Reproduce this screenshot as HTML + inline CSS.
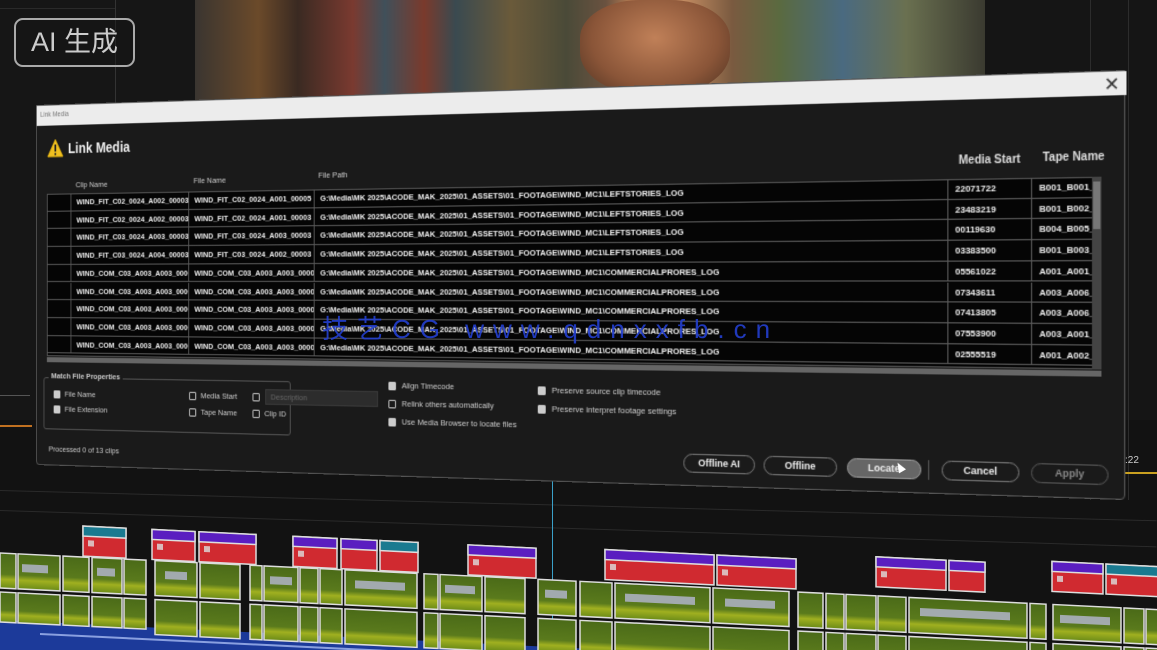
<!DOCTYPE html>
<html><head><meta charset="utf-8"><style>
*{margin:0;padding:0;box-sizing:border-box}
body{width:1157px;height:650px;overflow:hidden;background:#121212;position:relative;font-family:"Liberation Sans",sans-serif;color:#ddd}
.abs{position:absolute}
#dlg{position:absolute;left:0;top:0;width:1089px;height:360px;transform-origin:0 0;transform:matrix3d(0.8318,-0.04266,0,-0.0001497,0,1,0,0,0,0,1,0,36,105,0,1);background:#1a1a1a;border:1px solid #555;border-radius:0 0 4px 4px}
#dlg .t{position:absolute;white-space:nowrap;font-family:"Liberation Sans Narrow","Liberation Sans",sans-serif}
.row{position:absolute;left:12px;width:1048px;height:17.7px;border-bottom:1px solid #5a5a5a}
.row div{position:absolute;top:0;height:17.7px;line-height:17.7px;font-size:8px;color:#eee;white-space:nowrap;overflow:hidden;font-family:"Liberation Sans Narrow","Liberation Sans",sans-serif;font-weight:bold;border-left:1px solid #5a5a5a;padding-left:6px}
.cb{position:absolute;width:8px;height:8px;border:1px solid #ccc;border-radius:1px}
.cb.on{background:#ccc}
.lbl{position:absolute;font-size:8px;color:#ccc;white-space:nowrap}
.btn{position:absolute;height:17px;border:1.5px solid #777;border-radius:9px;font-size:9px;font-weight:bold;text-align:center;line-height:14px;color:#eee;top:330px}
</style></head><body>
<div class="abs" style="left:0;top:0;width:195px;height:420px;background:#161616"></div>
<div class="abs" style="left:115px;top:0;width:1px;height:110px;background:#333"></div>
<div class="abs" style="left:0;top:8px;width:115px;height:1px;background:#2a2a2a"></div>
<div class="abs" style="left:985px;top:0;width:172px;height:420px;background:#151515"></div>
<div class="abs" style="left:1090px;top:0;width:1px;height:500px;background:#2c2c2c"></div>
<div class="abs" style="left:1128px;top:0;width:1px;height:500px;background:#2c2c2c"></div>
<div class="abs" style="left:195px;top:0;width:790px;height:100px;background:linear-gradient(90deg,#3a3530 0%,#6b4a2a 8%,#3a2a22 13%,#7a3a30 20%,#40505a 24%,#7a3a2c 29%,#3a4a50 33%,#6a5a3a 40%,#4a4a38 47%,#6a5240 52%,#b07850 55%,#c08a60 62%,#7a5a40 68%,#5a6a40 74%,#4a6a80 82%,#6a7050 90%,#3a3a30 100%)"></div>
<div class="abs" style="left:580px;top:0;width:150px;height:95px;border-radius:40% 40% 45% 45%;background:radial-gradient(ellipse at 50% 40%,#c08058,#8a5538 60%,#4a3020 100%)"></div>
<div class="abs" style="left:14px;top:18px;width:121px;height:49px;border:2px solid #aaa;border-radius:9px;font-family:'Liberation Sans','Noto Sans CJK SC',sans-serif;font-size:27px;color:#ccc;text-align:center;line-height:44px;background:rgba(20,20,20,.4)">AI 生成</div>
<div class="abs" style="left:0;top:425px;width:32px;height:2px;background:#c07020"></div>
<div class="abs" style="left:0;top:395px;width:30px;height:1px;background:#555"></div>
<div class="abs" style="left:1125px;top:455px;font-size:10px;color:#ccc">:22</div>
<div class="abs" style="left:1125px;top:472px;width:32px;height:2px;background:#c9a020"></div>
<div class="abs" style="left:0;top:490px;width:1157px;height:1px;background:#2a2a2a;transform:rotate(1.5deg);transform-origin:0 0"></div>
<div class="abs" style="left:0;top:510px;width:1157px;height:1px;background:#2a2a2a;transform:rotate(1.8deg);transform-origin:0 0"></div>
<div class="abs" style="left:552px;top:480px;width:1px;height:170px;background:#3aa0c8"></div>

<svg class="abs" style="left:0;top:0" width="1157" height="650">
<defs>
<linearGradient id="gv" x1="0" y1="0" x2="0" y2="1"><stop offset="0" stop-color="#4a6a18"/><stop offset=".6" stop-color="#5a7a1c"/><stop offset=".75" stop-color="#a0b020"/><stop offset="1" stop-color="#6a8a18"/></linearGradient>
</defs>
<g transform="skewY(2.8)">
<rect x="0" y="620" width="600" height="40" fill="#1c3a9a"/>
<path d="M40 632 L600 632" stroke="#8aa0e0" stroke-width="2"/>
<g stroke="#ddd" stroke-width="1.5" fill="url(#gv)">
<rect x="0" y="553" width="16" height="35"/><rect x="18" y="553" width="42" height="35"/><rect x="63" y="553" width="26" height="35"/><rect x="92" y="553" width="30" height="35"/><rect x="124" y="553" width="22" height="35"/>
<rect x="155" y="553" width="42" height="35"/><rect x="200" y="553" width="40" height="35"/><rect x="250" y="553" width="12" height="35"/><rect x="264" y="553" width="34" height="35"/><rect x="300" y="553" width="18" height="35"/><rect x="320" y="553" width="22" height="35"/><rect x="345" y="553" width="72" height="35"/>
<rect x="424" y="553" width="14" height="35"/><rect x="440" y="553" width="42" height="35"/><rect x="485" y="553" width="40" height="35"/><rect x="538" y="553" width="38" height="35"/><rect x="580" y="553" width="32" height="35"/>
<rect x="615" y="553" width="95" height="35"/><rect x="713" y="553" width="76" height="35"/><rect x="798" y="553" width="25" height="35"/><rect x="826" y="553" width="18" height="35"/><rect x="846" y="553" width="30" height="35"/><rect x="878" y="553" width="28" height="35"/><rect x="909" y="553" width="118" height="35"/><rect x="1030" y="553" width="16" height="35"/><rect x="1053" y="553" width="68" height="35"/><rect x="1124" y="553" width="20" height="35"/><rect x="1146" y="553" width="20" height="35"/>
<rect x="0" y="592" width="16" height="30"/><rect x="18" y="592" width="42" height="30"/><rect x="63" y="592" width="26" height="30"/><rect x="92" y="592" width="30" height="30"/><rect x="124" y="592" width="22" height="30"/>
<rect x="155" y="592" width="42" height="35"/><rect x="200" y="592" width="40" height="35"/><rect x="250" y="592" width="12" height="35"/><rect x="264" y="592" width="34" height="35"/><rect x="300" y="592" width="18" height="35"/><rect x="320" y="592" width="22" height="35"/><rect x="345" y="592" width="72" height="35"/>
<rect x="424" y="592" width="14" height="35"/><rect x="440" y="592" width="42" height="35"/><rect x="485" y="592" width="40" height="35"/><rect x="538" y="592" width="38" height="35"/><rect x="580" y="592" width="32" height="35"/>
<rect x="615" y="592" width="95" height="35"/><rect x="713" y="592" width="76" height="35"/><rect x="798" y="592" width="25" height="35"/><rect x="826" y="592" width="18" height="35"/><rect x="846" y="592" width="30" height="35"/><rect x="878" y="592" width="28" height="35"/><rect x="909" y="592" width="118" height="35"/><rect x="1030" y="592" width="16" height="35"/><rect x="1053" y="592" width="68" height="35"/><rect x="1124" y="592" width="20" height="35"/><rect x="1146" y="592" width="20" height="35"/>
</g>
<g fill="#b0b4c8" opacity=".85">
<rect x="22" y="563" width="26" height="8"/><rect x="97" y="563" width="18" height="8"/><rect x="165" y="563" width="22" height="8"/><rect x="270" y="563" width="22" height="8"/><rect x="355" y="563" width="50" height="8"/><rect x="445" y="563" width="30" height="8"/><rect x="545" y="563" width="22" height="8"/><rect x="625" y="563" width="70" height="8"/><rect x="725" y="563" width="50" height="8"/><rect x="920" y="563" width="90" height="8"/><rect x="1060" y="563" width="50" height="8"/></g>
<g stroke="#ddd" stroke-width="1.5">
<g><rect x="83" y="522" width="43" height="30" fill="#d02a30"/><rect x="83" y="522" width="43" height="10" fill="#1a7a90"/></g>
<g><rect x="152" y="522" width="43" height="30" fill="#d02a30"/><rect x="152" y="522" width="43" height="10" fill="#5a1ec0"/></g>
<g><rect x="199" y="522" width="57" height="30" fill="#d02a30"/><rect x="199" y="522" width="57" height="10" fill="#5a1ec0"/></g>
<g><rect x="293" y="522" width="44" height="30" fill="#d02a30"/><rect x="293" y="522" width="44" height="10" fill="#5a1ec0"/></g>
<g><rect x="341" y="522" width="36" height="30" fill="#d02a30"/><rect x="341" y="522" width="36" height="10" fill="#5a1ec0"/></g>
<g><rect x="380" y="522" width="38" height="30" fill="#d02a30"/><rect x="380" y="522" width="38" height="10" fill="#1a7a90"/></g>
<g><rect x="468" y="522" width="68" height="30" fill="#d02a30"/><rect x="468" y="522" width="68" height="10" fill="#5a1ec0"/></g>
<g><rect x="605" y="520" width="109" height="30" fill="#d02a30"/><rect x="605" y="520" width="109" height="10" fill="#5a1ec0"/></g>
<g><rect x="717" y="520" width="79" height="30" fill="#d02a30"/><rect x="717" y="520" width="79" height="10" fill="#5a1ec0"/></g>
<g><rect x="876" y="514" width="70" height="30" fill="#d02a30"/><rect x="876" y="514" width="70" height="10" fill="#5a1ec0"/></g>
<g><rect x="949" y="514" width="36" height="30" fill="#d02a30"/><rect x="949" y="514" width="36" height="10" fill="#5a1ec0"/></g>
<g><rect x="1052" y="510" width="51" height="30" fill="#d02a30"/><rect x="1052" y="510" width="51" height="10" fill="#5a1ec0"/></g>
<g><rect x="1106" y="510" width="55" height="30" fill="#d02a30"/><rect x="1106" y="510" width="55" height="10" fill="#1a7a90"/></g>
</g>
<g fill="#ddd" opacity=".8">
<rect x="88" y="536" width="6" height="6"/><rect x="157" y="536" width="6" height="6"/><rect x="204" y="536" width="6" height="6"/><rect x="298" y="536" width="6" height="6"/><rect x="473" y="536" width="6" height="6"/><rect x="610" y="534" width="6" height="6"/><rect x="722" y="534" width="6" height="6"/><rect x="881" y="528" width="6" height="6"/><rect x="1057" y="524" width="6" height="6"/><rect x="1111" y="524" width="6" height="6"/></g>
</g>
</svg>

<div id="dlg">
<div class="abs" style="left:0;top:0;width:1089px;height:20px;background:#ececec"></div>
<div class="t" style="left:4px;top:6px;font-size:7px;color:#777">Link Media</div>
<div class="t" style="left:1070px;top:1px;font-size:16px;color:#333;font-family:'DejaVu Sans',sans-serif">✕</div>
<svg class="abs" style="left:12px;top:33px" width="20" height="19"><path d="M10 1 L19 18 L1 18 Z" fill="#f0c020" stroke="#e0b010" stroke-linejoin="round"/><rect x="9" y="6" width="2" height="7" fill="#222"/><rect x="9" y="14.5" width="2" height="2" fill="#222"/></svg>
<div class="t" style="left:37px;top:35px;font-size:14px;font-weight:bold;color:#eee;font-family:'Liberation Sans',sans-serif">Link Media</div>
<div class="t" style="left:46px;top:75px;font-size:8px;color:#ccc">Clip Name</div>
<div class="t" style="left:182px;top:73px;font-size:8px;color:#ccc">File Name</div>
<div class="t" style="left:320px;top:70px;font-size:8px;color:#ccc">File Path</div>
<div class="t" style="left:945px;top:67px;font-size:10px;font-weight:bold;color:#ddd">Media Start</div>
<div class="t" style="left:1018px;top:66px;font-size:10px;font-weight:bold;color:#ddd">Tape Name</div>
<div class="abs" style="left:12px;top:88px;width:1056px;height:162px;background:#050505;border:1px solid #555"></div>
<div class="abs" style="left:1060px;top:88px;width:8px;height:162px;background:#444"></div>
<div class="abs" style="left:1061px;top:92px;width:6px;height:40px;background:#777"></div>
<div class="abs" style="left:12px;top:251px;width:1056px;height:5px;background:#666"></div>
<div style="position:absolute;left:0;top:88px">
<div class="row" style="top:0"><div style="left:28px;width:136px">WIND_FIT_C02_0024_A002_00003</div><div style="left:164px;width:139px">WIND_FIT_C02_0024_A001_00005</div><div style="left:303px;width:620px">G:\Media\MK 2025\ACODE_MAK_2025\01_ASSETS\01_FOOTAGE\WIND_MC1\LEFTSTORIES_LOG</div><div style="left:923px;width:73px">22071722</div><div style="left:996px;width:52px">B001_B001_0</div></div>
<div class="row" style="top:17.7px"><div style="left:28px;width:136px">WIND_FIT_C02_0024_A002_00003</div><div style="left:164px;width:139px">WIND_FIT_C02_0024_A001_00003</div><div style="left:303px;width:620px">G:\Media\MK 2025\ACODE_MAK_2025\01_ASSETS\01_FOOTAGE\WIND_MC1\LEFTSTORIES_LOG</div><div style="left:923px;width:73px">23483219</div><div style="left:996px;width:52px">B001_B002_0</div></div>
<div class="row" style="top:35.4px"><div style="left:28px;width:136px">WIND_FIT_C03_0024_A003_00003</div><div style="left:164px;width:139px">WIND_FIT_C03_0024_A003_00003</div><div style="left:303px;width:620px">G:\Media\MK 2025\ACODE_MAK_2025\01_ASSETS\01_FOOTAGE\WIND_MC1\LEFTSTORIES_LOG</div><div style="left:923px;width:73px">00119630</div><div style="left:996px;width:52px">B004_B005_0</div></div>
<div class="row" style="top:53.1px"><div style="left:28px;width:136px">WIND_FIT_C03_0024_A004_00003</div><div style="left:164px;width:139px">WIND_FIT_C03_0024_A002_00003</div><div style="left:303px;width:620px">G:\Media\MK 2025\ACODE_MAK_2025\01_ASSETS\01_FOOTAGE\WIND_MC1\LEFTSTORIES_LOG</div><div style="left:923px;width:73px">03383500</div><div style="left:996px;width:52px">B001_B003_0</div></div>
<div class="row" style="top:70.8px"><div style="left:28px;width:136px">WIND_COM_C03_A003_A003_00003</div><div style="left:164px;width:139px">WIND_COM_C03_A003_A003_00003</div><div style="left:303px;width:620px">G:\Media\MK 2025\ACODE_MAK_2025\01_ASSETS\01_FOOTAGE\WIND_MC1\COMMERCIALPRORES_LOG</div><div style="left:923px;width:73px">05561022</div><div style="left:996px;width:52px">A001_A001_0</div></div>
<div class="row" style="top:88.5px"><div style="left:28px;width:136px">WIND_COM_C03_A003_A003_00003</div><div style="left:164px;width:139px">WIND_COM_C03_A003_A003_00003</div><div style="left:303px;width:620px">G:\Media\MK 2025\ACODE_MAK_2025\01_ASSETS\01_FOOTAGE\WIND_MC1\COMMERCIALPRORES_LOG</div><div style="left:923px;width:73px">07343611</div><div style="left:996px;width:52px">A003_A006_0</div></div>
<div class="row" style="top:106.2px"><div style="left:28px;width:136px">WIND_COM_C03_A003_A003_00003</div><div style="left:164px;width:139px">WIND_COM_C03_A003_A003_00003</div><div style="left:303px;width:620px">G:\Media\MK 2025\ACODE_MAK_2025\01_ASSETS\01_FOOTAGE\WIND_MC1\COMMERCIALPRORES_LOG</div><div style="left:923px;width:73px">07413805</div><div style="left:996px;width:52px">A003_A006_0</div></div>
<div class="row" style="top:123.9px"><div style="left:28px;width:136px">WIND_COM_C03_A003_A003_00003</div><div style="left:164px;width:139px">WIND_COM_C03_A003_A003_00003</div><div style="left:303px;width:620px">G:\Media\MK 2025\ACODE_MAK_2025\01_ASSETS\01_FOOTAGE\WIND_MC1\COMMERCIALPRORES_LOG</div><div style="left:923px;width:73px">07553900</div><div style="left:996px;width:52px">A003_A001_0</div></div>
<div class="row" style="top:141.6px"><div style="left:28px;width:136px">WIND_COM_C03_A003_A003_00003</div><div style="left:164px;width:139px">WIND_COM_C03_A003_A003_00003</div><div style="left:303px;width:620px">G:\Media\MK 2025\ACODE_MAK_2025\01_ASSETS\01_FOOTAGE\WIND_MC1\COMMERCIALPRORES_LOG</div><div style="left:923px;width:73px">02555519</div><div style="left:996px;width:52px">A001_A002_0</div></div>
</div>
<div class="abs" style="left:8px;top:271px;width:282px;height:52px;border:1px solid #555;border-radius:3px"></div>
<div class="lbl" style="left:14px;top:265px;background:#1a1a1a;padding:0 3px;font-weight:bold">Match File Properties</div>
<div class="cb on" style="left:20px;top:284px"></div><div class="lbl" style="left:33px;top:283px">File Name</div>
<div class="cb on" style="left:20px;top:299px"></div><div class="lbl" style="left:33px;top:298px">File Extension</div>
<div class="cb" style="left:177px;top:283px"></div><div class="lbl" style="left:190px;top:282px">Media Start</div>
<div class="cb" style="left:177px;top:299px"></div><div class="lbl" style="left:190px;top:298px">Tape Name</div>
<div class="cb" style="left:248px;top:283px"></div><div class="cb" style="left:248px;top:299px"></div><div class="lbl" style="left:261px;top:298px">Clip ID</div>
<div class="abs" style="left:262px;top:279px;width:122px;height:15px;background:#2c2c2c;border:1px solid #3a3a3a"></div>
<div class="lbl" style="left:268px;top:282px;color:#666">Description</div>
<div class="cb on" style="left:395px;top:270px"></div><div class="lbl" style="left:409px;top:269px">Align Timecode</div>
<div class="cb" style="left:395px;top:287px"></div><div class="lbl" style="left:409px;top:286px">Relink others automatically</div>
<div class="cb on" style="left:395px;top:304px"></div><div class="lbl" style="left:409px;top:303px">Use Media Browser to locate files</div>
<div class="cb on" style="left:549px;top:272px"></div><div class="lbl" style="left:563px;top:271px">Preserve source clip timecode</div>
<div class="cb on" style="left:549px;top:289px"></div><div class="lbl" style="left:563px;top:288px">Preserve interpret footage settings</div>
<div class="lbl" style="left:14px;top:338px">Processed 0 of 13 clips</div>
<div class="btn" style="left:692px;width:68px">Offline AI</div>
<div class="btn" style="left:768px;width:68px">Offline</div>
<div class="btn" style="left:845px;width:67px;background:#666;border-color:#999">Locate</div>
<div class="abs" style="left:918px;top:330px;width:1px;height:17px;background:#555"></div>
<div class="btn" style="left:930px;width:68px">Cancel</div>
<div class="btn" style="left:1008px;width:66px;color:#888;border-color:#555">Apply</div>
</div>
<div class="abs" style="left:896px;top:462px;width:0;height:0;border-left:4px solid transparent;border-right:4px solid transparent;border-bottom:10px solid #fff;transform:rotate(-30deg)"></div>
<div class="abs" style="left:322px;top:309px;font-family:'Liberation Sans','Noto Sans CJK SC',sans-serif;font-size:26px;color:#2440d0;letter-spacing:9px;white-space:nowrap;opacity:.9">技艺CG www.qdnxxfb.cn</div>
</body></html>
